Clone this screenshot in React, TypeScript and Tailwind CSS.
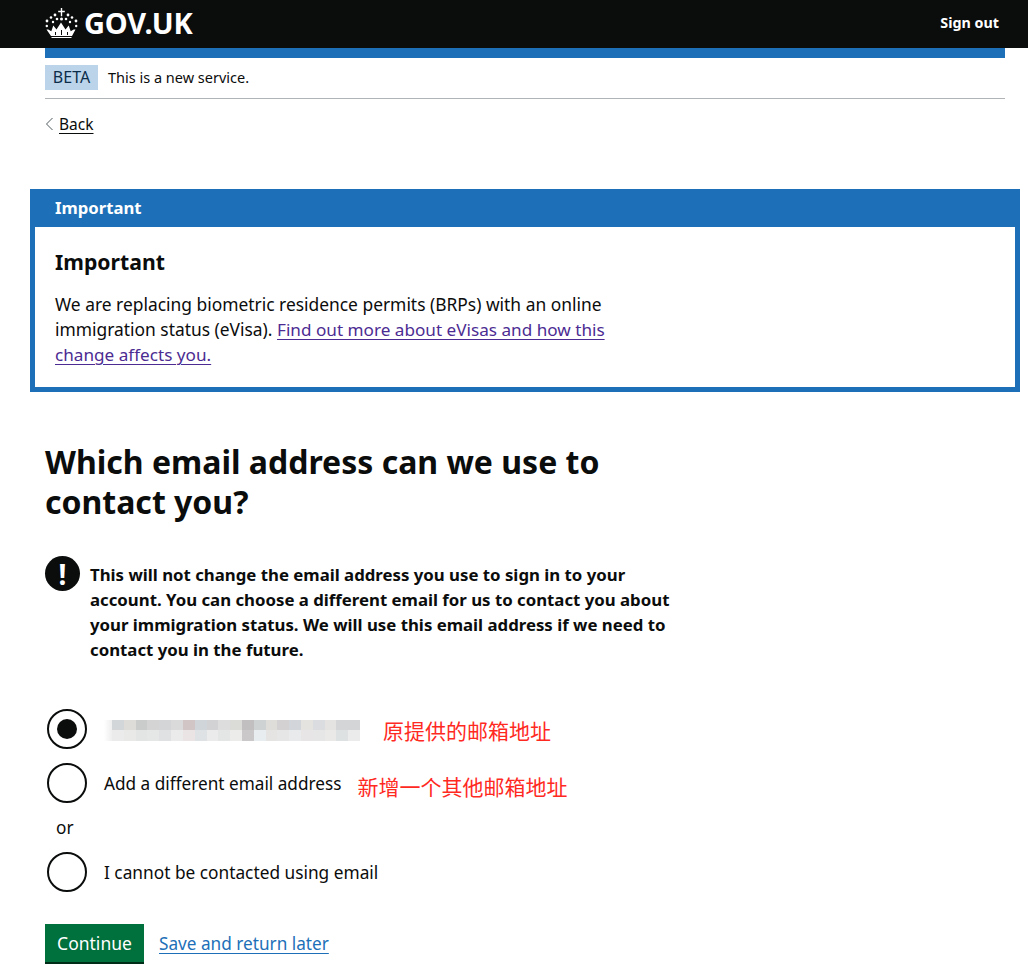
const blurTop = [
  'bg-[#d3d6d9]', 'bg-[#dddcd9]', 'bg-[#c9ccca]', 'bg-[#d4d4d5]', 'bg-[#d4d5d7]', 'bg-[#dadadb]', 'bg-[#d1c5c5]', 'bg-[#d0d5da]', 'bg-[#d2d2d4]', 'bg-[#dcdddc]', 'bg-[#dbdbd8]',
  'bg-[#c2bfc1]', 'bg-[#ced2d2]', 'bg-[#dfddda]', 'bg-[#d4d1d3]', 'bg-[#d2d6da]', 'bg-[#e4e3df]', 'bg-[#dadce0]', 'bg-[#e4e3e1]', 'bg-[#d3d5d7]', 'bg-[#d3d5d7]',
];
const blurBottom = [
  'bg-[#ebebeb]', 'bg-[#e9e9e8]', 'bg-[#e3e5e5]', 'bg-[#e5e6e6]', 'bg-[#dfe1e3]', 'bg-[#ebebec]', 'bg-[#eae5e4]', 'bg-[#dfe2e5]', 'bg-[#ebebec]', 'bg-[#e3e6e5]', 'bg-[#ecedea]',
  'bg-[#cbc8c9]', 'bg-[#e8edf0]', 'bg-[#e6e4e2]', 'bg-[#e7e6e7]', 'bg-[#e8eaec]', 'bg-[#e7e5e6]', 'bg-[#e6e6e6]', 'bg-[#ebe9e7]', 'bg-[#dee1e1]', 'bg-[#ebebeb]',
];

const Crown = () => (
  <svg width="33" height="31" viewBox="0 0 33 31" className="block">
    <g fill="#fff">
      <path d="M15.800 1h1.400v2.800h2.600v1.400h-2.600v4h-1.400v-4h-2.600V3.800h2.600z" />
      <circle cx="10" cy="8" r="1.400" />
      <circle cx="23" cy="8" r="1.400" />
      <circle cx="6" cy="10.500" r="1.300" />
      <circle cx="12" cy="12" r="1.300" />
      <circle cx="21" cy="12" r="1.300" />
      <circle cx="27" cy="10.500" r="1.300" />
      <circle cx="16.500" cy="12" r="1.500" />
      <circle cx="2" cy="14" r="1.400" />
      <circle cx="8" cy="15" r="1.200" />
      <circle cx="25" cy="15" r="1.200" />
      <circle cx="31" cy="14" r="1.400" />
      <circle cx="1.800" cy="19" r="1.200" />
      <circle cx="31.200" cy="19" r="1.200" />
      <path d="M1.500 22.500h1.800l3 1.800 2-5.800 3.200 4 4.500-7 4.500 7 3.200-4 2 5.800 3-1.800h1.800L27 29H6z" />
      <path d="M6.500 30h20v1h-20z" />
    </g>
    <path d="M10.500 25v3M16.500 23v5M22.500 25v3" stroke="#0b0c0c" strokeWidth="1" />
  </svg>
);

function Radio({ checked, children }: { checked?: boolean; children: React.ReactNode }) {
  return (
    <div className="flex items-center h-10 pl-0.5">
      <div className="w-10 h-10 rounded-full border-2 border-[#0b0c0c] flex items-center justify-center shrink-0">
        {checked && <div className="w-5 h-5 rounded-full bg-[#0b0c0c]" />}
      </div>
      <div className="ml-[17px]">{children}</div>
    </div>
  );
}

export default function App() {
  return (
    <div className="min-h-[974px] bg-white text-[#0b0c0c] text-[17.2px] leading-[25px] font-['Noto_Sans','Noto_Sans_CJK_SC',sans-serif] overflow-hidden">
      <header className="bg-[#0b0c0c] h-12 pl-[45px] pr-[29px] flex items-center justify-between text-white">
        <div className="flex items-center gap-1.5 -mt-1">
          <Crown />
          <span className="text-[29px] leading-none font-bold tracking-[-0.2px]">GOV.UK</span>
        </div>
        <a className="text-[14.3px] font-bold -mt-[3px]">Sign out</a>
      </header>

      <div className="ml-[45px] w-[960px]">
        <div className="h-2.5 bg-[#1d70b8]" />
        <div className="h-[41px] flex items-center border-b border-[#b1b4b6] text-[14.5px] pb-0.5">
          <span className="w-[53px] h-[25px] bg-[#bbd4ea] text-[#0c2d4a] text-[16px] flex items-center justify-center">BETA</span>
          <span className="ml-2.5">This is a new service.</span>
        </div>
        <div className="mt-[13px] h-6 flex items-center text-[15.500px]">
          <svg width="9" height="14" viewBox="0 0 9 14" className="mr-[5px]">
            <path d="M7.500 1 1.500 7l6 6" fill="none" stroke="#505a5f" strokeWidth="1" />
          </svg>
          <a className="underline decoration-1 underline-offset-[3px]">Back</a>
        </div>
      </div>

      <section className="mt-[53px] ml-[30px] w-[990px] h-[203px] border-[5px] border-[#1d70b8]">
        <div className="bg-[#1d70b8] h-[33px] px-5 text-white text-[16.700px] font-bold flex items-center pb-1.5">Important</div>
        <div className="px-5 pt-[20px]">
          <h3 className="text-[21.200px] leading-[30px] font-bold">Important</h3>
          <p className="mt-[15px] w-[570px] text-[17.400px]">
            We are replacing biometric residence permits (BRPs) with an online immigration status (eVisa).{' '}
            <a className="text-[#4c2c92] text-[17.150px] underline decoration-1 underline-offset-[3px]">Find out more about eVisas and how this change affects you.</a>
          </p>
        </div>
      </section>

      <main className="px-[45px]">
        <h1 className="mt-[50px] w-[620px] text-[32px] leading-[40px] font-bold">Which email address can we use to contact you?</h1>

        <div className="mt-[34px] flex">
          <div className="w-[35px] h-[35px] rounded-full bg-[#0b0c0c] text-white flex items-center justify-center text-[28px] font-bold leading-none shrink-0">!</div>
          <p className="ml-2.5 mt-[6px] w-[600px] text-[16.800px] font-bold">
            This will not change the email address you use to sign in to your account. You can choose a different email for us to contact you about your immigration status. We will use this email address if we need to contact you in the future.
          </p>
        </div>

        <div className="mt-[47px]">
          <Radio checked>
            <div className="flex items-center">
              <div className="w-[256px] h-[21px] flex mt-0.5">
                <div className="w-2 h-full bg-gradient-to-l from-[#eeeeee] to-transparent" />
                <div className="flex-1 flex flex-col">
                  <div className="flex flex-1">{blurTop.map((c, i) => <div key={i} className={`flex-1 ${c}`} />)}</div>
                  <div className="flex flex-1">{blurBottom.map((c, i) => <div key={i} className={`flex-1 ${c}`} />)}</div>
                </div>
              </div>
              <span className="ml-[23px] mt-1 text-[21px] text-[#ff2a1f]">原提供的邮箱地址</span>
            </div>
          </Radio>
          <div className="mt-[14px]">
            <Radio>
              <div className="flex items-center">
                <span>Add a different email address</span>
                <span className="ml-[16px] mt-2 text-[21px] text-[#ff2a1f]">新增一个其他邮箱地址</span>
              </div>
            </Radio>
          </div>
          <div className="mt-[12px] h-[25px] pl-[11px]">or</div>
          <div className="mt-[12px]">
            <Radio><span className="text-[17.300px]">I cannot be contacted using email</span></Radio>
          </div>
        </div>

        <div className="mt-[32px] flex items-center">
          <button className="w-[99px] h-10 bg-[#00703c] border-b-2 border-[#002d18] text-white text-[17.500px]">Continue</button>
          <a className="ml-[15px] -mt-px text-[#1d70b8] underline decoration-1 underline-offset-[3px]">Save and return later</a>
        </div>
      </main>
    </div>
  );
}
